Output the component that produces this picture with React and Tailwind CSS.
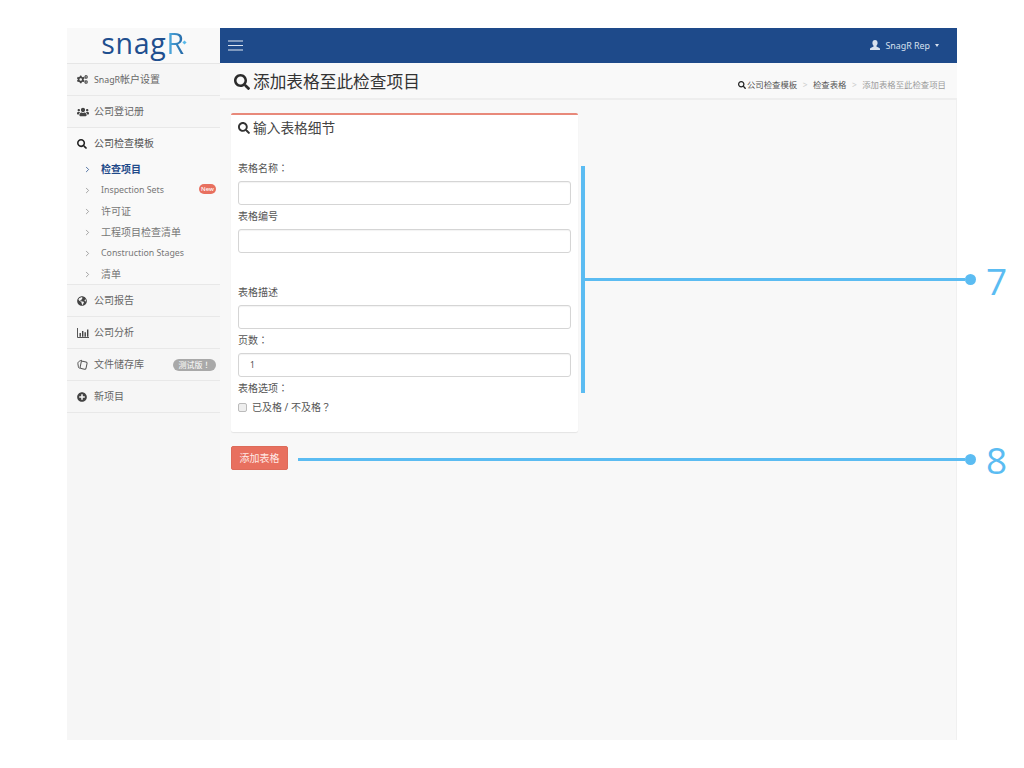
import React from "react";
import { FaSearch, FaCogs, FaUsers, FaGlobeAmericas, FaPlusCircle } from "react-icons/fa";
import { LuChevronRight } from "react-icons/lu";

const FONT = "font-['Noto_Sans','Noto_Sans_CJK_SC',sans-serif]";

function Colon({ ch }) {
  return <span className="font-['Noto_Sans_CJK_TC',sans-serif]">{ch}</span>;
}

function Item({ icon, label, badge }) {
  return (
    <div className="flex items-center h-[32px] pl-[10px] pr-[4px] border-b border-[#e8e8e8] bg-[#f6f6f6] text-[#666] text-[10px]">
      <span className="w-[17px] flex justify-start text-[#444]">{icon}</span>
      <span>{label}</span>
      {badge}
    </div>
  );
}

function Sub({ label, active, badge, latin }) {
  return (
    <div className={`flex items-center h-[21px] pl-[16px] pr-[4px] ${active ? "text-[#1f4a8a] font-bold" : "text-[#777]"}`}>
      <LuChevronRight className={`w-[9px] h-[9px] mr-[9px] ${active ? "text-[#1f4a8a]" : "text-[#888]"}`} strokeWidth={2} />
      <span className={latin ? "text-[8.8px]" : "text-[10px]"}>{label}</span>
      {badge}
    </div>
  );
}

function Field({ label, value, labelClass = "" }) {
  return (
    <div className={labelClass}>
      <div className="text-[10px] text-[#555] leading-[14px] mb-[6px]">{label}</div>
      <div className="h-[24px] rounded-[3px] border border-[#d5d5d5] bg-white pl-[11px] flex items-center text-[8.5px] text-[#555] shadow-[inset_0_1px_1px_rgba(0,0,0,0.05)]">
        {value}
      </div>
    </div>
  );
}

export default function App() {
  return (
    <div className={`relative w-[1024px] h-[768px] bg-white overflow-hidden pt-[28px] pl-[67px] ${FONT}`}>
      <div className="flex w-[890px] h-[712px]">
        <aside className="w-[153px] shrink-0 bg-[#f6f6f6] flex flex-col">
          <div className="h-[36px] flex items-center justify-center border-b border-[#e6e6e6] bg-[#f9f9f9]">
            <div className="font-['Open_Sans',sans-serif] font-medium text-[28.5px] leading-none tracking-[0.7px] text-[#1f4f8f] -mt-[4px] flex items-center">
              snag
              <span className="bg-gradient-to-r from-[#58b9ea] to-[#1f5f9f] bg-clip-text text-transparent">R</span>
              <span className="w-[3px] h-[3px] rotate-45 bg-[#58b9ea] -ml-[2px] mb-[3px]" />
            </div>
          </div>
          <Item icon={<FaCogs className="w-[11px] h-[11px]" />} label={<><span className="text-[8.8px]">SnagR</span>帐户设置</>} />
          <Item icon={<FaUsers className="w-[12px] h-[12px]" />} label="公司登记册" />
          <div className="h-[157px] bg-[#f9f9f9] border-b border-[#e8e8e8]">
            <div className="flex items-center h-[31px] pl-[10px] text-[10px] text-[#555]">
              <span className="w-[17px] text-[#222]"><FaSearch className="w-[10px] h-[10px]" /></span>
              公司检查模板
            </div>
            <Sub label="检查项目" active />
            <Sub
              label="Inspection Sets"
              latin
              badge={<span className="ml-auto w-[17px] h-[10px] rounded-full bg-[#e8705f] text-white text-[6px] font-medium text-center leading-[10px] -mt-[3px]">New</span>}
            />
            <Sub label="许可证" />
            <Sub label="工程项目检查清单" />
            <Sub label="Construction Stages" latin />
            <Sub label="清单" />
          </div>
          <Item icon={<FaGlobeAmericas className="w-[10px] h-[10px]" />} label="公司报告" />
          <Item
            icon={
              <svg width="12" height="10" viewBox="0 0 12 10" fill="none">
                <path d="M0.5 0v9.5H12" stroke="#444" strokeWidth="0.9" />
                <path d="M2.5 5h1.4v3.8H2.5zM5 3h1.4v5.8H5zM7.5 4.2h1.4v4.6H7.5zM10 1.5h1.4v7.3H10z" fill="#444" />
              </svg>
            }
            label="公司分析"
          />
          <Item
            icon={
              <svg width="11" height="11" viewBox="0 0 11 11" fill="none" stroke="#555" strokeWidth="1">
                <rect x="3.6" y="2.6" width="6" height="7.4" rx="1.4" transform="rotate(12 6.6 6.3)" />
                <path d="M5 1.2 2.4 2.2C1.2 2.8 .8 3.6 .9 4.8l.5 3c.1.8.6 1.4 1.3 1.6" />
              </svg>
            }
            label="文件储存库"
            badge={<span className="ml-auto h-[12px] w-[43px] rounded-full bg-[#a9a9a9] text-white text-[8px] leading-[12px] text-center">测试版<Colon ch="！" /></span>}
          />
          <Item icon={<FaPlusCircle className="w-[10px] h-[10px]" />} label="新项目" />
        </aside>

        <main className="flex-1 min-w-0 bg-[#f8f8f8] flex flex-col">
          <header className="h-[35px] bg-[#1e4a8a] flex items-center justify-between pl-[8px] pr-[18px] shrink-0">
            <svg width="15" height="11" viewBox="0 0 15 11" stroke="#dfe7f2" strokeWidth="1.2">
              <path d="M0 1h15M0 5.5h15M0 10h15" />
            </svg>
            <div className="flex items-center text-[#d8e1ee] text-[8.9px]">
              <svg width="10" height="10" viewBox="0 0 10 10" fill="#d8e1ee" className="mr-[5px]">
                <path d="M5 0C3.4 0 2.4 1.2 2.4 3c0 1.2.5 2.2 1.2 2.8v.8L.6 8C0 8.3 0 9 0 10h10c0-1 0-1.7-.6-2L6.4 6.6v-.8c.7-.6 1.2-1.6 1.2-2.8C7.6 1.2 6.6 0 5 0z" />
              </svg>
              SnagR Rep
              <span className="ml-[5px] w-0 h-0 border-x-[2.5px] border-x-transparent border-t-[3px] border-t-[#d8e1ee]" />
            </div>
          </header>
          <div className="h-[37px] flex items-center justify-between pl-[14px] pr-[11px] bg-[#f9f9f9] border-b-2 border-[#eeeeee] shrink-0">
            <h1 className="flex items-center text-[16.7px] font-normal text-[#333] mt-[3px]">
              <FaSearch className="w-[16px] h-[16px] mr-[3px] text-[#2b2b2b]" />
              添加表格至此检查项目
            </h1>
            <div className="flex items-center text-[8.4px] text-[#555] mt-[9px]">
              <FaSearch className="w-[8px] h-[8px] mr-[1px] text-[#222]" />
              公司检查模板
              <span className="mx-[5.5px] text-[#ccc]">&gt;</span>
              检查表格
              <span className="mx-[5.5px] text-[#ccc]">&gt;</span>
              <span className="text-[#999]">添加表格至此检查项目</span>
            </div>
          </div>
          <div className="flex-1 pt-[13px] pl-[11px] border-r border-[#f0f0f0]">
            <section className="w-[347px] h-[319px] bg-white border-t-2 border-[#e8897a] rounded-[2px] shadow-[0_1px_1px_rgba(0,0,0,0.08)] px-[7px] pt-[3px]">
              <h2 className="flex items-center text-[13.7px] font-normal text-[#444] leading-[20px]">
                <FaSearch className="w-[12px] h-[12px] mr-[3px] text-[#333]" />
                输入表格细节
              </h2>
              <div className="mt-[23px]">
                <Field label={<>表格名称<Colon ch="：" /></>} />
                <Field label="表格编号" labelClass="mt-[4px]" />
                <Field label="表格描述" labelClass="mt-[32px]" />
                <Field label={<>页数<Colon ch="：" /></>} value="1" labelClass="mt-[4px]" />
                <div className="text-[10px] text-[#555] leading-[14px] mt-[4px]">表格选项<Colon ch="：" /></div>
                <label className="flex items-center mt-[5px] text-[10px] text-[#555] leading-[14px]">
                  <span className="w-[9px] h-[9px] rounded-[2px] border border-[#bbb] bg-[#eee] mr-[5px]" />
                  已及格 / 不及格<Colon ch="？" />
                </label>
              </div>
            </section>
            <button className="mt-[14px] w-[57px] h-[24px] rounded-[2px] bg-[#e8705f] border border-[#dd6b5a] text-[#ffe9e5] text-[10px] flex items-center justify-center">
              添加表格
            </button>
          </div>
        </main>
      </div>

      <div className="absolute left-[581px] top-[166px] w-[4px] h-[227px] bg-[#5bbcf2]" />
      <div className="absolute left-[585px] top-[278px] w-[380px] h-[3px] bg-[#5bbcf2]" />
      <div className="absolute left-[965px] top-[274px] w-[11px] h-[11px] rounded-full bg-[#5bbcf2]" />
      <div className="absolute left-[986px] top-[259px] text-[37px] leading-[44px] text-[#5bbcf2] font-['Open_Sans',sans-serif]">7</div>
      <div className="absolute left-[298px] top-[458px] w-[667px] h-[3px] bg-[#5bbcf2]" />
      <div className="absolute left-[965px] top-[454px] w-[11px] h-[11px] rounded-full bg-[#5bbcf2]" />
      <div className="absolute left-[986px] top-[438px] text-[37px] leading-[44px] text-[#5bbcf2] font-['Open_Sans',sans-serif]">8</div>
    </div>
  );
}
